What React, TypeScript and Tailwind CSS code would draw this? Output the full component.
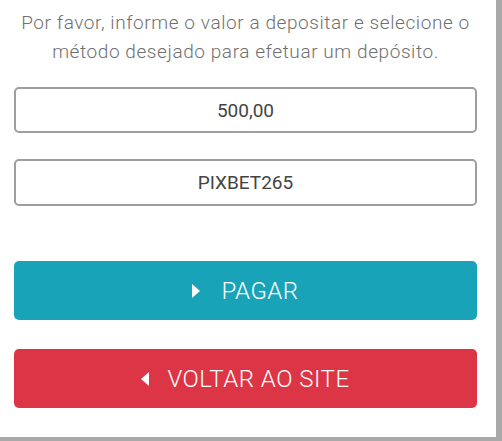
export default function App() {
  return (
    <div className="w-[502px] h-[441px] bg-[#a9a9a9] overflow-hidden">
      <div className="w-[496px] h-[437px] bg-white px-[14px] pr-[19px] font-['Roboto',sans-serif]">
        {/* Instructions */}
        <p className="pt-[8px] text-center text-[19px] leading-[29px] tracking-[0.58px] font-light text-[#6f6f6f]">
          Por favor, informe o valor a depositar e selecione o método desejado para efetuar um depósito.
        </p>

        {/* Inputs */}
        <div className="mt-[21px] flex flex-col gap-[26px]">
          <input
            readOnly
            value="500,00"
            className="h-[46px] w-full rounded-[5px] border-2 border-[#9e9e9e] bg-white text-center text-[19px] text-[#444] outline-none"
          />
          <input
            readOnly
            value="PIXBET265"
            className="h-[47px] w-full rounded-[5px] border-2 border-[#9e9e9e] bg-white text-center text-[19px] text-[#444] outline-none"
          />
        </div>

        {/* Actions */}
        <div className="mt-[55px] flex flex-col gap-[29px]">
          <button className="flex h-[59px] w-full items-center justify-center gap-[21px] rounded-[5px] bg-[#19a3b9] text-[24px] tracking-[0.5px] font-light text-white">
            <svg width="8" height="14" viewBox="0 0 8 14" className="mt-[1px]">
              <path d="M0 0 L8 7 L0 14 Z" fill="white" />
            </svg>
            PAGAR
          </button>
          <button className="flex h-[59px] w-full items-center justify-center gap-[18px] rounded-[5px] bg-[#dc3545] text-[24px] tracking-[0.5px] font-light text-white">
            <svg width="8" height="14" viewBox="0 0 8 14" className="mt-[1px]">
              <path d="M8 0 L0 7 L8 14 Z" fill="white" />
            </svg>
            VOLTAR AO SITE
          </button>
        </div>
      </div>
    </div>
  );
}
